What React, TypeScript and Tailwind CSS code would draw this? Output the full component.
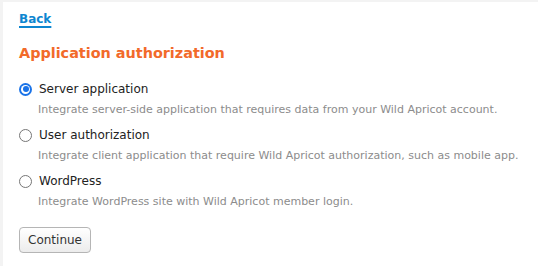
import { useState } from "react"

const options = [
    { id: "server", label: "Server application", desc: "Integrate server-side application that requires data from your Wild Apricot account." },
    { id: "user", label: "User authorization", desc: "Integrate client application that require Wild Apricot authorization, such as mobile app." },
    { id: "wp", label: "WordPress", desc: "Integrate WordPress site with Wild Apricot member login." },
]

export default function App() {
    const [selected, setSelected] = useState("server")

    return (
        <div className="w-[538px] h-[266px] bg-white border-l-[3px] border-t-2 border-[#f3f3f3] pl-[16px] pt-[4px] font-['DejaVu_Sans',sans-serif] text-[#222]">
            <a href="#" className="text-[12px] font-bold text-[#0e86d0] underline underline-offset-[3px] decoration-2 leading-[16px]">Back</a>

            <h1 className="mt-[13px] text-[14.4px] font-bold text-[#f26a2a] leading-[20px]">Application authorization</h1>

            <div className="mt-[17px] flex flex-col">
                {options.map((o) => (
                    <div key={o.id} className="flex flex-col h-[46px]">
                        <label className="flex items-center gap-[7px] cursor-pointer h-[18px]" onClick={() => setSelected(o.id)}>
                            {selected === o.id ? (
                                <span className="w-[13px] h-[13px] rounded-full bg-[#1a73e8] flex items-center justify-center">
                                    <span className="w-[9px] h-[9px] rounded-full bg-white flex items-center justify-center">
                                        <span className="w-[6px] h-[6px] rounded-full bg-[#1a73e8]" />
                                    </span>
                                </span>
                            ) : (
                                <span className="w-[13px] h-[13px] rounded-full border border-[#767676] bg-white" />
                            )}
                            <span className="text-[12px] leading-[18px]">{o.label}</span>
                        </label>
                        <p className="pl-[19px] mt-[5px] text-[11px] leading-[14px] text-[#8c8c8c]">{o.desc}</p>
                    </div>
                ))}
            </div>

            <button className="mt-[9px] w-[72px] h-[26px] rounded-[4px] border border-[#b5b5b5] bg-gradient-to-b from-white to-[#ececec] text-[12px] text-[#333]">Continue</button>
        </div>
    )
}
